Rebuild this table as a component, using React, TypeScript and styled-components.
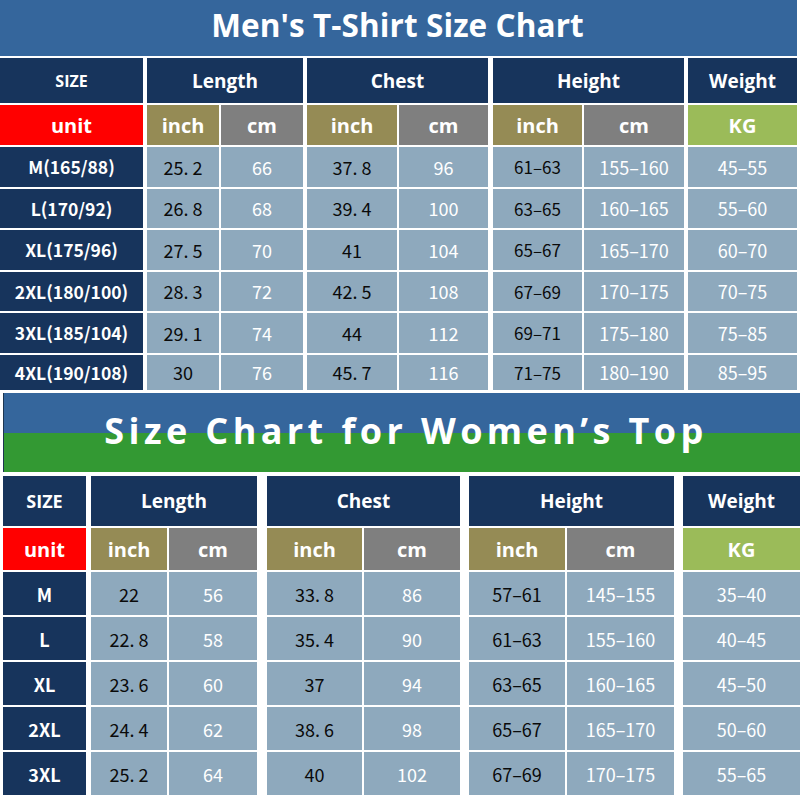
import React from "react";
import styled, { createGlobalStyle } from "styled-components";

const GlobalStyle = createGlobalStyle`
  html, body { margin: 0; padding: 0; background: #ffffff; }
  body { width: 800px; height: 800px; overflow: hidden; }
`;

const C = {
  titleBlue: "#35669c",
  green: "#339933",
  navy: "#17345c",
  red: "#ff0000",
  olive: "#958b55",
  grey: "#7f7f7f",
  kg: "#9bbb59",
  data: "#8ea9bd",
};

const HEAD_FONT = `"Open Sans", Lato, "Liberation Sans", sans-serif`;
const NUM_FONT = `"Noto Sans CJK SC", "Noto Sans", sans-serif`;

const Page = styled.div`
  display: flex;
  flex-direction: column;
  gap: 3px;
  width: 800px;
`;

const Section = styled.section<{ $offset: number }>`
  display: flex;
  flex-direction: column;
  width: 797px;
  margin-left: ${(p) => p.$offset}px;
`;

const TitleBar = styled.div<{ $women?: boolean }>`
  display: flex;
  align-items: center;
  justify-content: center;
  height: ${(p) => (p.$women ? 79 : 56)}px;
  background: ${(p) =>
    p.$women
      ? `linear-gradient(${C.titleBlue} 0 40px, ${C.green} 40px 100%)`
      : C.titleBlue};
  border-left: ${(p) => (p.$women ? "1px solid #1d3550" : "none")};
  box-sizing: border-box;
`;

const Title = styled.h1<{ $women?: boolean }>`
  margin: 0;
  font-family: ${HEAD_FONT};
  font-weight: 700;
  color: #ffffff;
  font-size: ${(p) => (p.$women ? 36 : 31.5)}px;
  letter-spacing: ${(p) => (p.$women ? 4.4 : 0.1)}px;
  line-height: 1;
  transform: translate(${(p) => (p.$women ? "4px, -2px" : "-1px, -3px")});
`;

const Grid = styled.div<{ $cols: string; $rows: string; $top: number }>`
  display: grid;
  grid-template-columns: ${(p) => p.$cols};
  grid-template-rows: ${(p) => p.$rows};
  column-gap: 2px;
  row-gap: 2px;
  margin-top: ${(p) => p.$top}px;
`;

const CellBase = styled.div<{ $col: string }>`
  grid-column: ${(p) => p.$col};
  display: flex;
  align-items: center;
  justify-content: center;
  color: #ffffff;
  white-space: nowrap;
`;

const GroupHead = styled(CellBase)<{ $size: number }>`
  background: ${C.navy};
  font-family: ${HEAD_FONT};
  font-weight: 700;
  font-size: ${(p) => p.$size}px;
`;

const UnitCell = styled(CellBase)<{ $bg: string }>`
  background: ${(p) => p.$bg};
  font-family: ${HEAD_FONT};
  font-weight: 700;
  font-size: 20px;
`;

const SizeCell = styled(CellBase)<{ $big?: boolean }>`
  background: ${C.navy};
  font-family: ${NUM_FONT};
  font-weight: 700;
  font-size: ${(p) => (p.$big ? 18 : 17.5)}px;
`;

const DataCell = styled(CellBase)<{ $dark?: boolean; $small?: boolean }>`
  background: ${C.data};
  font-family: ${NUM_FONT};
  font-weight: 400;
  font-size: ${(p) => (p.$small ? 17 : 18)}px;
  color: ${(p) => (p.$dark ? "#0a0a0a" : "#ffffff")};
`;

type Layout = {
  cols: string;
  rows: string;
  top: number;
  offset: number;
  sizeHead: number;
  smallRange: boolean;
};

// track indices: 1 SIZE, 2 spacer, 3 L-inch, 4 L-cm, 5 spacer, 6 C-inch, 7 C-cm,
// 8 spacer, 9 H-inch, 10 H-cm, 11 spacer, 12 Weight
const COL = {
  size: "1",
  lengthGroup: "3 / 5",
  chestGroup: "6 / 8",
  heightGroup: "9 / 11",
  weight: "12",
  lInch: "3",
  lCm: "4",
  cInch: "6",
  cCm: "7",
  hInch: "9",
  hCm: "10",
};

const fmtDec = (v: string) => v.replace(".", ". ");
const fmtRange = (v: string) => v.replace("-", "–");

type Row = [string, string, string, string, string, string, string, string];

const menRows: Row[] = [
  ["M(165/88)", "25.2", "66", "37.8", "96", "61-63", "155-160", "45-55"],
  ["L(170/92)", "26.8", "68", "39.4", "100", "63-65", "160-165", "55-60"],
  ["XL(175/96)", "27.5", "70", "41", "104", "65-67", "165-170", "60-70"],
  ["2XL(180/100)", "28.3", "72", "42.5", "108", "67-69", "170-175", "70-75"],
  ["3XL(185/104)", "29.1", "74", "44", "112", "69-71", "175-180", "75-85"],
  ["4XL(190/108)", "30", "76", "45.7", "116", "71-75", "180-190", "85-95"],
];

const womenRows: Row[] = [
  ["M", "22", "56", "33.8", "86", "57-61", "145-155", "35-40"],
  ["L", "22.8", "58", "35.4", "90", "61-63", "155-160", "40-45"],
  ["XL", "23.6", "60", "37", "94", "63-65", "160-165", "45-50"],
  ["2XL", "24.4", "62", "38.6", "98", "65-67", "165-170", "50-60"],
  ["3XL", "25.2", "64", "40", "102", "67-69", "170-175", "55-65"],
];

function Chart({
  title,
  women,
  layout,
  rows,
}: {
  title: string;
  women?: boolean;
  layout: Layout;
  rows: Row[];
}) {
  return (
    <Section $offset={layout.offset}>
      <TitleBar $women={women}>
        <Title $women={women}>{title}</Title>
      </TitleBar>
      <Grid $cols={layout.cols} $rows={layout.rows} $top={layout.top}>
        <GroupHead $col={COL.size} $size={layout.sizeHead}>SIZE</GroupHead>
        <GroupHead $col={COL.lengthGroup} $size={19}>Length</GroupHead>
        <GroupHead $col={COL.chestGroup} $size={19}>Chest</GroupHead>
        <GroupHead $col={COL.heightGroup} $size={19}>Height</GroupHead>
        <GroupHead $col={COL.weight} $size={19}>Weight</GroupHead>

        <UnitCell $col={COL.size} $bg={C.red}>unit</UnitCell>
        <UnitCell $col={COL.lInch} $bg={C.olive}>inch</UnitCell>
        <UnitCell $col={COL.lCm} $bg={C.grey}>cm</UnitCell>
        <UnitCell $col={COL.cInch} $bg={C.olive}>inch</UnitCell>
        <UnitCell $col={COL.cCm} $bg={C.grey}>cm</UnitCell>
        <UnitCell $col={COL.hInch} $bg={C.olive}>inch</UnitCell>
        <UnitCell $col={COL.hCm} $bg={C.grey}>cm</UnitCell>
        <UnitCell $col={COL.weight} $bg={C.kg}>KG</UnitCell>

        {rows.map((r) => (
          <React.Fragment key={r[0]}>
            <SizeCell $col={COL.size} $big={women}>{r[0]}</SizeCell>
            <DataCell $col={COL.lInch} $dark>{fmtDec(r[1])}</DataCell>
            <DataCell $col={COL.lCm}>{r[2]}</DataCell>
            <DataCell $col={COL.cInch} $dark>{fmtDec(r[3])}</DataCell>
            <DataCell $col={COL.cCm}>{r[4]}</DataCell>
            <DataCell $col={COL.hInch} $dark $small={layout.smallRange}>
              {fmtRange(r[5])}
            </DataCell>
            <DataCell $col={COL.hCm}>{fmtRange(r[6])}</DataCell>
            <DataCell $col={COL.weight}>{fmtRange(r[7])}</DataCell>
          </React.Fragment>
        ))}
      </Grid>
    </Section>
  );
}

const menLayout: Layout = {
  cols: "143px 0px 72px 82px 0px 90px 89px 1px 89px 100px 0px 109px",
  rows: "45px 40px repeat(5, 39.5px) 35.5px",
  top: 2,
  offset: 0,
  sizeHead: 16,
  smallRange: true,
};

const womenLayout: Layout = {
  cols: "83px 1px 76px 88px 6px 95px 96px 5px 96px 107px 5px 117px",
  rows: "50px 42px repeat(5, 43px)",
  top: 4,
  offset: 3,
  sizeHead: 18,
  smallRange: false,
};

export default function App() {
  return (
    <>
      <GlobalStyle />
      <Page>
        <Chart title="Men's T-Shirt Size Chart" layout={menLayout} rows={menRows} />
        <Chart
          title="Size Chart for Women’s Top"
          women
          layout={womenLayout}
          rows={womenRows}
        />
      </Page>
    </>
  );
}
